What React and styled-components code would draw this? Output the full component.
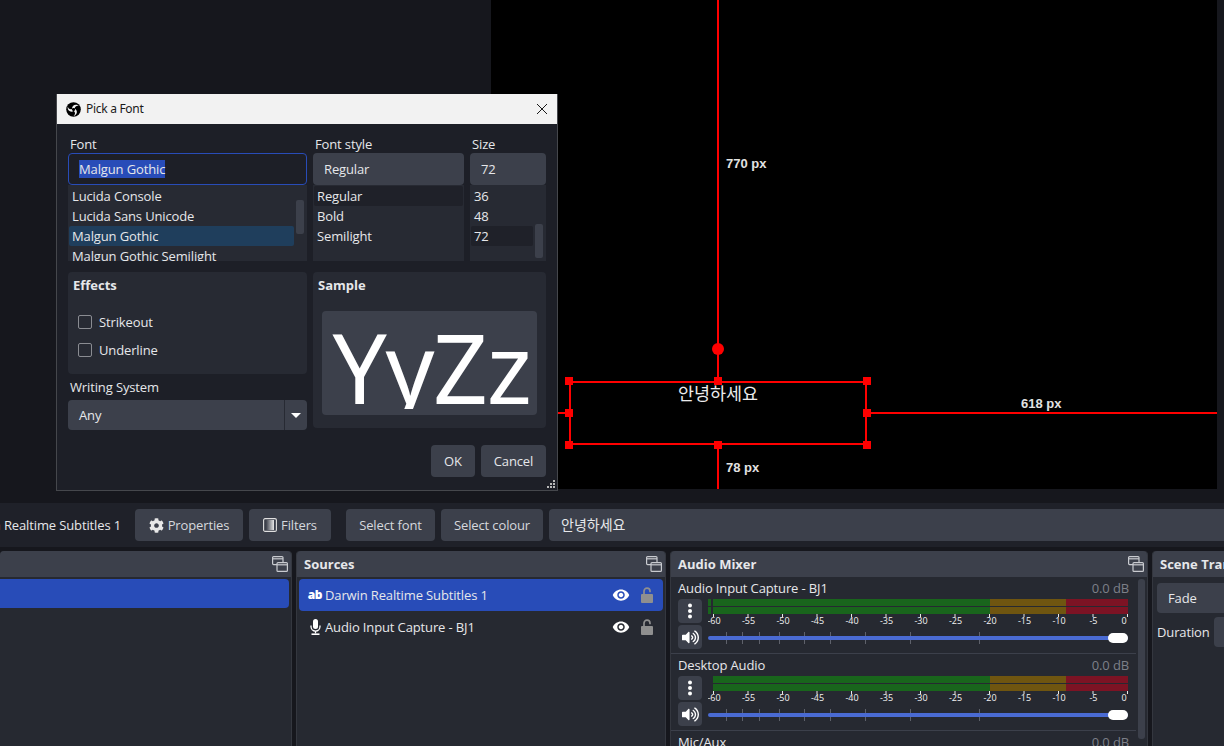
import React from 'react';
import styled, { createGlobalStyle } from 'styled-components';
import { FaCog, FaVolumeUp } from 'react-icons/fa';
import { MdVisibility } from 'react-icons/md';

const GlobalStyle = createGlobalStyle`
    html, body {
        margin: 0;
        padding: 0;
        background: #16171d;
    }
    body {
        font-family: "Open Sans", "Noto Sans CJK KR", sans-serif;
        font-size: 13px;
        line-height: 18px;
        letter-spacing: -0.13px;
        color: #e6e7ea;
    }
`;

const Page = styled.div`
    width: 1224px;
    height: 746px;
    overflow: hidden;
    position: relative;
    display: flex;
    flex-direction: column;
    background: #16171d;
`;

/* preview */
const PreviewRow = styled.div`
    height: 489px;
    padding-left: 491px;
    padding-right: 7px;
    margin-bottom: 14px;
    flex: none;
    display: flex;
`;

const Canvas = styled.div`
    flex: 1;
    background: #000;
    position: relative;
    overflow: hidden;
`;

const GuideV = styled.div`
    position: absolute;
    left: 226px;
    width: 2px;
    top: ${(p) => p.$top}px;
    height: ${(p) => p.$height}px;
    background: #f00;
`;

const GuideH = styled.div`
    position: absolute;
    top: 412px;
    height: 2px;
    left: ${(p) => p.$left}px;
    width: ${(p) => p.$width}px;
    background: #f00;
`;

const RotateDot = styled.div`
    position: absolute;
    left: 221px;
    top: 343px;
    width: 12px;
    height: 12px;
    border-radius: 50%;
    background: #f00;
`;

const Measure = styled.div`
    position: absolute;
    left: ${(p) => p.$left}px;
    top: ${(p) => p.$top}px;
    font-family: "Liberation Sans", Arial, sans-serif;
    font-weight: 700;
    font-size: 13px;
    line-height: 16px;
    letter-spacing: 0;
    color: #e2e2e2;
    white-space: nowrap;
`;

const SelBox = styled.div`
    position: absolute;
    left: 78px;
    top: 381px;
    width: 298px;
    height: 64px;
`;

const SelOutline = styled.div`
    position: absolute;
    inset: 0;
    border: 2px solid #f00;
    box-sizing: border-box;
`;

const Handle = styled.div`
    position: absolute;
    width: 8px;
    height: 8px;
    left: calc(${(p) => p.$x}% - 4px);
    top: calc(${(p) => p.$y}% - 4px);
    background: #f00;
`;

const SourceText = styled.div`
    position: absolute;
    left: 0;
    right: 0;
    top: 0;
    text-align: center;
    font-family: "Noto Sans CJK KR", sans-serif;
    font-size: 17.4px;
    line-height: 24px;
    letter-spacing: 0;
    color: #ececec;
`;

/* toolbar */
const Toolbar = styled.div`
    height: 44px;
    flex: none;
    box-sizing: border-box;
    padding: 6px 0;
    margin-bottom: 4px;
    display: flex;
    background: #1f2129;
`;

const SourceName = styled.div`
    width: 121px;
    margin-right: 14px;
    display: flex;
    justify-content: flex-end;
    align-items: center;
    overflow: hidden;
    white-space: nowrap;
    flex: none;
`;

const ToolButton = styled.div`
    height: 32px;
    box-sizing: border-box;
    width: ${(p) => p.$width}px;
    margin-right: ${(p) => p.$gap ?? 6}px;
    flex: none;
    background: #3c404b;
    border-radius: 4px;
    display: flex;
    align-items: center;
    justify-content: center;
    gap: 4px;
    color: #d6d8dd;
    svg {
        flex: none;
    }
`;

const ToolInput = styled.div`
    flex: 1;
    height: 32px;
    margin-right: -6px;
    padding-left: 12px;
    background: #3c404b;
    border-radius: 4px;
    display: flex;
    align-items: center;
    font-size: 14px;
    letter-spacing: 0;
`;

/* docks */
const Docks = styled.div`
    flex: 1;
    display: flex;
    gap: 4px;
    min-height: 0;
`;

const Dock = styled.section`
    width: ${(p) => p.$width}px;
    flex: ${(p) => (p.$width ? 'none' : '1')};
    margin-right: ${(p) => (p.$width ? 0 : -20)}px;
    display: flex;
    flex-direction: column;
    background: #262931;
    border-radius: 4px 4px 0 0;
    border-right: 1px solid #34373f;
    border-left: ${(p) => (p.$noLeft ? 'none' : '1px solid #34373f')};
    box-sizing: border-box;
`;

const DockHeader = styled.header`
    height: 26px;
    flex: none;
    background: #3c404b;
    border-radius: 4px 4px 0 0;
    padding: 0 3px 0 7px;
    display: flex;
    align-items: center;
    justify-content: space-between;
    font-weight: 700;
    letter-spacing: 0;
    white-space: nowrap;
`;

const DockBody = styled.div`
    flex: 1;
    min-height: 0;
    padding: ${(p) => p.$padding || '0'};
`;

const SceneRow = styled.div`
    height: 29px;
    margin: 2px 2px 0 0;
    background: #284cb8;
    border-radius: 0 4px 4px 0;
`;

const SourceRow = styled.div`
    height: 32px;
    box-sizing: border-box;
    padding: 0 10px 0 9px;
    display: flex;
    align-items: center;
    border-radius: 4px;
    background: ${(p) => (p.$active ? '#284cb8' : 'transparent')};
`;

const SourceIcon = styled.span`
    width: 14px;
    margin-right: 3px;
    flex: none;
    display: flex;
    justify-content: center;
    font-weight: 800;
    font-size: 12px;
    letter-spacing: -0.4px;
    color: #fff;
`;

const SourceLabel = styled.span`
    flex: 1;
`;

const RowIcons = styled.div`
    display: flex;
    align-items: center;
    gap: 11px;
    color: #fff;
`;

/* mixer */
const MixerBody = styled.div`
    flex: 1;
    min-height: 0;
    display: flex;
`;

const MixerList = styled.div`
    width: 465px;
    flex: none;
    overflow: hidden;
`;

const ScrollThumb = styled.div`
    width: ${(p) => p.$width || 7}px;
    height: ${(p) => p.$height}px;
    margin: ${(p) => p.$margin};
    background: #3c404b;
    border-radius: 3px;
    flex: none;
`;

const MixerRow = styled.div`
    padding: 2px 7px 4px 7px;
    border-bottom: 1px solid #3c404b;
`;

const MixerTop = styled.div`
    height: 18px;
    margin-bottom: 2px;
    display: flex;
    justify-content: space-between;
`;

const Db = styled.span`
    color: #7d8089;
`;

const MixerControls = styled.div`
    display: grid;
    grid-template-columns: 24px 1fr;
    column-gap: 6px;
`;

const MixerButtons = styled.div`
    display: flex;
    flex-direction: column;
    gap: 2px;
`;

const SquareButton = styled.div`
    width: 24px;
    height: 24px;
    background: #3c404b;
    border-radius: 4px;
    display: flex;
    align-items: center;
    justify-content: center;
    color: #fff;
`;

const Meter = styled.div`
    display: flex;
    flex-direction: column;
    gap: 1px;
`;

const Channel = styled.div`
    height: 7px;
    display: flex;
`;

const Segment = styled.div`
    width: ${(p) => p.$width}px;
    background: ${(p) => p.$color};
`;

const Scale = styled.svg`
    display: block;
    width: 420px;
    height: 18px;
    text {
        font-family: "Open Sans", sans-serif;
        font-size: 9px;
        letter-spacing: 0;
        fill: #f2f2f2;
    }
`;

const Slider = styled.div`
    position: relative;
    width: 420px;
    height: 12px;
`;

const SliderTick = styled.div`
    position: absolute;
    left: ${(p) => p.$x}px;
    top: 0;
    width: 1px;
    height: 12px;
    background: #5e616b;
`;

const SliderTrack = styled.div`
    position: absolute;
    left: 0;
    right: 0;
    top: 4px;
    height: 4px;
    border-radius: 2px;
    background: #4a6bd3;
`;

const SliderThumb = styled.div`
    position: absolute;
    right: 0;
    top: 1px;
    width: 20px;
    height: 10px;
    border-radius: 5px;
    background: #fff;
`;

/* transitions */
const Combo = styled.div`
    height: 30px;
    background: #3c404b;
    border-radius: 4px;
    display: flex;
    align-items: center;
    padding-left: 11px;
`;

const DurationRow = styled.div`
    display: flex;
    align-items: center;
    gap: 4px;
    margin-top: 4px;
`;

const DurationInput = styled.div`
    flex: 1;
    height: 30px;
    background: #3c404b;
    border-radius: 4px;
`;

/* dialog */
const Dialog = styled.div`
    position: absolute;
    left: 56px;
    top: 94px;
    width: 502px;
    height: 397px;
    box-sizing: border-box;
    background: #1d1f27;
    border: 1px solid #45474c;
    border-top: none;
    display: flex;
    flex-direction: column;
`;

const TitleBar = styled.div`
    height: 30px;
    flex: none;
    background: #f2f2f2;
    color: #1a1a1a;
    font-family: "Noto Sans", sans-serif;
    font-size: 12px;
    letter-spacing: -0.3px;
    display: flex;
    align-items: center;
    padding-left: 9px;
    gap: 5px;
`;

const TitleText = styled.span`
    flex: 1;
`;

const CloseBox = styled.div`
    width: 30px;
    display: flex;
    justify-content: center;
`;

const DialogBody = styled.div`
    flex: 1;
    position: relative;
    padding: 11px 11px 0 11px;
`;

const PickerGrid = styled.div`
    display: grid;
    grid-template-columns: 239px 151px 76px;
    column-gap: 6px;
    margin-bottom: 11px;
`;

const PickerLabel = styled.div`
    height: 18px;
    padding-left: 2px;
`;

const FontField = styled.div`
    height: 32px;
    box-sizing: border-box;
    border: 1px solid #284cb8;
    border-radius: 4px;
    padding-left: 10px;
    display: flex;
    align-items: center;
`;

const Selected = styled.span`
    background: #284cb8;
`;

const ValueField = styled.div`
    height: 32px;
    box-sizing: border-box;
    background: #3c404b;
    border-radius: 4px;
    padding-left: ${(p) => p.$indent}px;
    display: flex;
    align-items: center;
`;

const ListBox = styled.div`
    height: 76px;
    box-sizing: border-box;
    background: #272a33;
    padding: 1px;
    position: relative;
    overflow: hidden;
`;

const ListItem = styled.div`
    height: 20px;
    width: ${(p) => p.$width}px;
    padding-left: 3px;
    box-sizing: border-box;
    line-height: 20px;
    white-space: nowrap;
    border-radius: 2px;
    background: ${(p) => p.$bg || 'transparent'};
`;

const ListScroll = styled.div`
    position: absolute;
    left: ${(p) => p.$left}px;
    top: ${(p) => p.$top}px;
    width: 8px;
    height: 34px;
    border-radius: 2px;
    background: #3c404b;
`;

const LowerGrid = styled.div`
    display: grid;
    grid-template-columns: 239px 233px;
    column-gap: 6px;
    align-items: start;
`;

const GroupBox = styled.div`
    background: #272a33;
    border-radius: 4px;
    height: ${(p) => p.$height}px;
    box-sizing: border-box;
    padding: 4px 5px;
`;

const GroupTitle = styled.div`
    font-weight: 700;
    letter-spacing: 0;
    height: 18px;
`;

const CheckRow = styled.div`
    display: flex;
    align-items: center;
    gap: 7px;
    height: 28px;
    padding-left: 5px;
`;

const CheckGroup = styled.div`
    margin-top: 14px;
`;

const CheckBox = styled.div`
    width: 14px;
    height: 14px;
    box-sizing: border-box;
    border: 1px solid #8a8c92;
    border-radius: 2px;
`;

const WritingLabel = styled.div`
    height: 18px;
    margin: 4px 0;
    padding-left: 2px;
`;

const SystemCombo = styled.div`
    height: 30px;
    background: #3c404b;
    border-radius: 4px;
    display: flex;
    align-items: center;
    padding-left: 11px;
`;

const SystemValue = styled.span`
    flex: 1;
`;

const ComboArrow = styled.div`
    width: 23px;
    height: 30px;
    box-sizing: border-box;
    border-left: 1px solid #272a33;
    display: flex;
    align-items: center;
    justify-content: center;
    &::before {
        content: '';
        border-left: 5px solid transparent;
        border-right: 5px solid transparent;
        border-top: 5px solid #fff;
    }
`;

const SamplePreview = styled.div`
    height: 104px;
    margin: 17px 4px 0;
    padding-left: 4px;
    background: #3c404b;
    border-radius: 4px;
    display: flex;
    justify-content: center;
    overflow: hidden;
`;

const SampleText = styled.div`
    height: 98px;
    overflow: hidden;
    font-family: "Noto Sans", sans-serif;
    font-size: 96px;
    line-height: 112px;
    letter-spacing: -1.3px;
    color: #fff;
`;

const DialogActions = styled.div`
    display: flex;
    justify-content: flex-end;
    gap: 6px;
    margin-top: 15px;
`;

const ActionButton = styled.div`
    height: 32px;
    width: ${(p) => p.$width}px;
    background: #3c404b;
    border-radius: 4px;
    display: flex;
    align-items: center;
    justify-content: center;
`;

const Grip = styled.svg`
    position: absolute;
    right: 1px;
    bottom: 1px;
`;

const ObsLogo = () => (
    <svg width="15" height="15" viewBox="-8 -8 16 16">
        <circle r="7.8" fill="#000" />
        {[0, 120, 240].map((r) => (
            <g key={r} transform={`rotate(${r})`}>
                <path d="M-1.6 -1 C-1.4 -4.4 2.4 -6.6 6 -3.6 C3.8 -4.4 1.8 -3.6 1.2 -1.2 C0.4 -2 -0.8 -1.8 -1.6 -1 Z" fill="#f2f2f2" />
            </g>
        ))}
    </svg>
);

const FloatIcon = () => (
    <svg width="16" height="16" viewBox="0 0 16 16" fill="none" stroke="#c9cbd0" strokeWidth="1.2">
        <rect x="0.6" y="0.6" width="10.4" height="8" rx="1" fill="#3c404b" />
        <path d="M0.6 2.8h10.4" />
        <rect x="5" y="6.6" width="10.4" height="8.8" rx="1" fill="#3c404b" />
        <path d="M5 8.8h10.4" />
    </svg>
);

const FilterIcon = () => (
    <svg width="14" height="14" viewBox="0 0 14 14">
        <defs>
            <linearGradient id="filterFade" x1="0" x2="1" y1="0" y2="0">
                <stop offset="0" stopColor="#3c404b" />
                <stop offset="1" stopColor="#e8e8e8" />
            </linearGradient>
        </defs>
        <rect x="0.6" y="0.6" width="12.8" height="12.8" rx="1.5" fill="#3c404b" stroke="#e0e0e0" strokeWidth="1.1" />
        <rect x="3" y="2" width="8" height="10" fill="url(#filterFade)" />
    </svg>
);

const LockIcon = () => (
    <svg width="12" height="16" viewBox="0 0 12 16">
        <path d="M3 7.5V4.2a3 3 0 0 1 6 0v1" fill="none" stroke="#8f8f8f" strokeWidth="1.7" />
        <rect x="0" y="7" width="12" height="9" rx="1" fill="#8f8f8f" />
    </svg>
);

const MicIcon = () => (
    <svg width="11" height="16" viewBox="0 0 11 16" fill="none" stroke="#fff" strokeWidth="1.3">
        <rect x="3" y="0" width="5" height="10" rx="2.5" fill="#fff" stroke="none" />
        <path d="M1 6.6v1a4.5 4.5 0 0 0 9 0v-1" />
        <path d="M5.5 12v2.4" />
        <path d="M1.5 15.2h8" strokeWidth="1.6" />
    </svg>
);

const DotsIcon = () => (
    <svg width="6" height="16" viewBox="0 0 6 16" fill="#fff">
        <circle cx="3" cy="2.5" r="2" />
        <circle cx="3" cy="8" r="2" />
        <circle cx="3" cy="13.5" r="2" />
    </svg>
);

const SCALE = [-60, -55, -50, -45, -40, -35, -30, -25, -20, -15, -10, -5, 0];
const SLIDER_TICKS = [18, 34, 51, 71, 96, 122, 157, 202, 271];

const MeterScale = () => (
    <Scale viewBox="0 0 420 18">
        {SCALE.map((db, i) => {
            const x = 5 + i * 34.5;
            return (
                <g key={db}>
                    <rect x={x} y="0" width="1" height="3" fill="#e8e8e8" />
                    <text x={db === 0 ? x - 3 : x + 1} y="10" textAnchor="middle">{db}</text>
                </g>
            );
        })}
    </Scale>
);

const MeterChannel = ({ leading }) => (
    <Channel>
        {leading ? (
            <>
                <Segment $width={3} $color="#19651c" />
                <Segment $width={2} $color="transparent" />
            </>
        ) : (
            <Segment $width={5} $color="transparent" />
        )}
        <Segment $width={277} $color="#19651c" />
        <Segment $width={76} $color="#6f5510" />
        <Segment $width={62} $color="#7c1324" />
    </Channel>
);

const MixerStrip = ({ name, leading }) => (
    <MixerRow>
        <MixerTop>
            <span>{name}</span>
            <Db>0.0 dB</Db>
        </MixerTop>
        <MixerControls>
            <MixerButtons>
                <SquareButton><DotsIcon /></SquareButton>
                <SquareButton><FaVolumeUp size={17} /></SquareButton>
            </MixerButtons>
            <div>
                <Meter>
                    <MeterChannel leading={leading} />
                    <MeterChannel leading={leading} />
                </Meter>
                <MeterScale />
                <Slider>
                    {SLIDER_TICKS.map((x) => <SliderTick key={x} $x={x} />)}
                    <SliderTrack />
                    <SliderThumb />
                </Slider>
            </div>
        </MixerControls>
    </MixerRow>
);

const HANDLES = [[0, 0], [50, 0], [100, 0], [0, 50], [100, 50], [0, 100], [50, 100], [100, 100]];

function App() {
    return (
        <Page>
            <GlobalStyle />
            <PreviewRow>
                <Canvas>
                    <GuideV $top={0} $height={381} />
                    <GuideV $top={445} $height={44} />
                    <GuideH $left={0} $width={78} />
                    <GuideH $left={376} $width={350} />
                    <RotateDot />
                    <Measure $left={235} $top={156}>770 px</Measure>
                    <Measure $left={530} $top={396}>618 px</Measure>
                    <Measure $left={235} $top={460}>78 px</Measure>
                    <SelBox>
                        <SelOutline />
                        <SourceText>안녕하세요</SourceText>
                        {HANDLES.map(([x, y]) => <Handle key={`${x}-${y}`} $x={x} $y={y} />)}
                    </SelBox>
                </Canvas>
            </PreviewRow>

            <Toolbar>
                <SourceName>Darwin Realtime Subtitles 1</SourceName>
                <ToolButton $width={108}><FaCog size={15} color="#e8e8e8" />Properties</ToolButton>
                <ToolButton $width={82} $gap={15}><FilterIcon />Filters</ToolButton>
                <ToolButton $width={89}>Select font</ToolButton>
                <ToolButton $width={102}>Select colour</ToolButton>
                <ToolInput>안녕하세요</ToolInput>
            </Toolbar>

            <Docks>
                <Dock $width={292} $noLeft>
                    <DockHeader><span /><FloatIcon /></DockHeader>
                    <DockBody><SceneRow /></DockBody>
                </Dock>
                <Dock $width={370}>
                    <DockHeader>Sources<FloatIcon /></DockHeader>
                    <DockBody $padding="2px 2px 0">
                        <SourceRow $active>
                            <SourceIcon>ab</SourceIcon>
                            <SourceLabel>Darwin Realtime Subtitles 1</SourceLabel>
                            <RowIcons><MdVisibility size={18} /><LockIcon /></RowIcons>
                        </SourceRow>
                        <SourceRow>
                            <SourceIcon><MicIcon /></SourceIcon>
                            <SourceLabel>Audio Input Capture - BJ1</SourceLabel>
                            <RowIcons><MdVisibility size={18} /><LockIcon /></RowIcons>
                        </SourceRow>
                    </DockBody>
                </Dock>
                <Dock $width={478}>
                    <DockHeader>Audio Mixer<FloatIcon /></DockHeader>
                    <MixerBody>
                        <MixerList>
                            <MixerStrip name="Audio Input Capture - BJ1" leading />
                            <MixerStrip name="Desktop Audio" />
                            <MixerStrip name="Mic/Aux" />
                        </MixerList>
                        <ScrollThumb $height={160} $margin="2px 0 0 2px" />
                    </MixerBody>
                </Dock>
                <Dock>
                    <DockHeader>Scene Transitions</DockHeader>
                    <DockBody $padding="6px 4px 0">
                        <Combo>Fade</Combo>
                        <DurationRow>Duration<DurationInput /></DurationRow>
                    </DockBody>
                </Dock>
            </Docks>

            <Dialog>
                <TitleBar>
                    <ObsLogo />
                    <TitleText>Pick a Font</TitleText>
                    <CloseBox>
                        <svg width="12" height="12" viewBox="0 0 12 12" stroke="#1a1a1a" strokeWidth="1">
                            <path d="M1 1l10 10M11 1L1 11" />
                        </svg>
                    </CloseBox>
                </TitleBar>
                <DialogBody>
                    <PickerGrid>
                        <div>
                            <PickerLabel>Font</PickerLabel>
                            <FontField><Selected>Malgun Gothic</Selected></FontField>
                            <ListBox>
                                <ListItem>Lucida Console</ListItem>
                                <ListItem>Lucida Sans Unicode</ListItem>
                                <ListItem $width={225} $bg="#1f3e5c">Malgun Gothic</ListItem>
                                <ListItem>Malgun Gothic Semilight</ListItem>
                                <ListScroll $left={228} $top={15} />
                            </ListBox>
                        </div>
                        <div>
                            <PickerLabel>Font style</PickerLabel>
                            <ValueField $indent={11}>Regular</ValueField>
                            <ListBox>
                                <ListItem $bg="#1f2129">Regular</ListItem>
                                <ListItem>Bold</ListItem>
                                <ListItem>Semilight</ListItem>
                            </ListBox>
                        </div>
                        <div>
                            <PickerLabel>Size</PickerLabel>
                            <ValueField $indent={11}>72</ValueField>
                            <ListBox>
                                <ListItem>36</ListItem>
                                <ListItem>48</ListItem>
                                <ListItem $width={62} $bg="#1f2129">72</ListItem>
                                <ListScroll $left={65} $top={39} />
                            </ListBox>
                        </div>
                    </PickerGrid>
                    <LowerGrid>
                        <div>
                            <GroupBox $height={102}>
                                <GroupTitle>Effects</GroupTitle>
                                <CheckGroup>
                                    <CheckRow><CheckBox />Strikeout</CheckRow>
                                    <CheckRow><CheckBox />Underline</CheckRow>
                                </CheckGroup>
                            </GroupBox>
                            <WritingLabel>Writing System</WritingLabel>
                            <SystemCombo>
                                <SystemValue>Any</SystemValue>
                                <ComboArrow />
                            </SystemCombo>
                        </div>
                        <GroupBox $height={156}>
                            <GroupTitle>Sample</GroupTitle>
                            <SamplePreview><SampleText>YyZz</SampleText></SamplePreview>
                        </GroupBox>
                    </LowerGrid>
                    <DialogActions>
                        <ActionButton $width={44}>OK</ActionButton>
                        <ActionButton $width={65}>Cancel</ActionButton>
                    </DialogActions>
                    <Grip width="10" height="10" viewBox="0 0 10 10" fill="#b8b8b8">
                        <rect x="7" y="1" width="2" height="2" />
                        <rect x="4" y="4" width="2" height="2" />
                        <rect x="7" y="4" width="2" height="2" />
                        <rect x="1" y="7" width="2" height="2" />
                        <rect x="4" y="7" width="2" height="2" />
                        <rect x="7" y="7" width="2" height="2" />
                    </Grip>
                </DialogBody>
            </Dialog>
        </Page>
    );
}

export default App;
